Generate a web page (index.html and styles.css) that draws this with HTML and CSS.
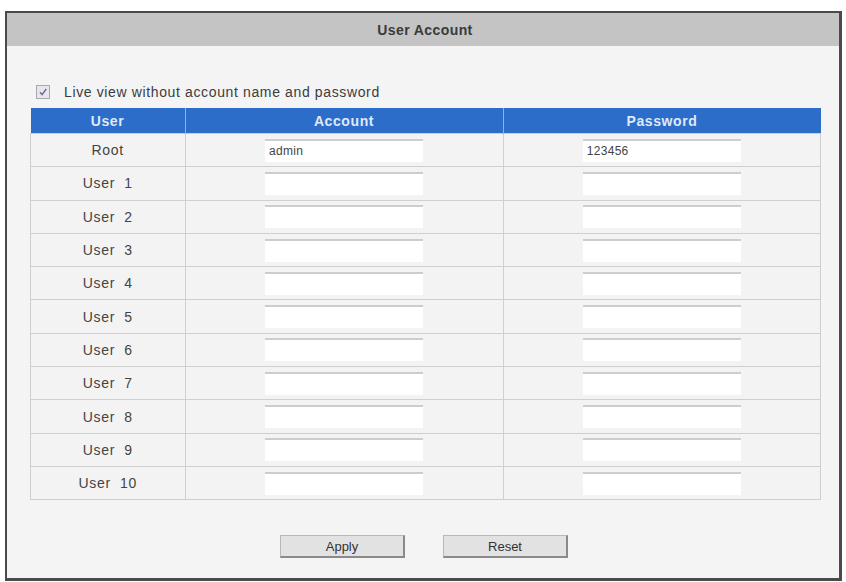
FILE: index.html
```html
<!DOCTYPE html>
<html>
<head>
<meta charset="utf-8">
<title>User Account</title>
<link rel="stylesheet" href="styles.css">
</head>
<body>
<div class="panel">
  <div class="panel-title">User Account</div>
  <div class="panel-body">
    <label class="live-row">
      <span class="check"><svg width="10" height="10" viewBox="0 0 10 10"><path d="M2 5.2 L4.1 7.6 L8.2 2" fill="none" stroke="#6a6a8a" stroke-width="1.4"/></svg></span>
      <span class="live-text">Live view without account name and password</span>
    </label>
    <table class="users">
      <thead>
        <tr><th class="c-user">User</th><th class="c-acc">Account</th><th class="c-pwd">Password</th></tr>
      </thead>
      <tbody>
        <tr><td class="name">Root</td><td><div class="field">admin</div></td><td><div class="field">123456</div></td></tr>
        <tr><td class="name">User&nbsp; 1</td><td><div class="field"></div></td><td><div class="field"></div></td></tr>
        <tr><td class="name">User&nbsp; 2</td><td><div class="field"></div></td><td><div class="field"></div></td></tr>
        <tr><td class="name">User&nbsp; 3</td><td><div class="field"></div></td><td><div class="field"></div></td></tr>
        <tr><td class="name">User&nbsp; 4</td><td><div class="field"></div></td><td><div class="field"></div></td></tr>
        <tr><td class="name">User&nbsp; 5</td><td><div class="field"></div></td><td><div class="field"></div></td></tr>
        <tr><td class="name">User&nbsp; 6</td><td><div class="field"></div></td><td><div class="field"></div></td></tr>
        <tr><td class="name">User&nbsp; 7</td><td><div class="field"></div></td><td><div class="field"></div></td></tr>
        <tr><td class="name">User&nbsp; 8</td><td><div class="field"></div></td><td><div class="field"></div></td></tr>
        <tr><td class="name">User&nbsp; 9</td><td><div class="field"></div></td><td><div class="field"></div></td></tr>
        <tr><td class="name">User&nbsp; 10</td><td><div class="field"></div></td><td><div class="field"></div></td></tr>
      </tbody>
    </table>
    <div class="actions">
      <button class="btn">Apply</button>
      <button class="btn">Reset</button>
    </div>
  </div>
</div>
</body>
</html>
```
FILE: styles.css
```css
html, body {
  margin: 0;
  padding: 0;
  background: #ffffff;
  font-family: "Liberation Sans", Arial, sans-serif;
  color: #333;
}
body {
  padding: 11px 0 0 5px;
}
.panel {
  width: 832px;
  height: 565px;
  border-style: solid;
  border-color: #4a4a4a;
  border-width: 2px 3px 3px 2px;
  background: #f4f4f4;
  display: flex;
  flex-direction: column;
}
.panel-title {
  height: 33px;
  background: #c4c4c4;
  display: flex;
  align-items: center;
  justify-content: center;
  font-size: 14px;
  font-weight: bold;
  letter-spacing: 0.4px;
  color: #3a3a3a;
  padding-left: 4px;
}
.panel-body {
  padding: 0 21px 0 23px;
  display: flex;
  flex-direction: column;
}
.live-row {
  margin-top: 39px;
  height: 14px;
  display: flex;
  align-items: center;
  margin-left: 6px;
}
.check {
  width: 12px;
  height: 12px;
  border: 1px solid #a8a8b0;
  background: #e6e6ec;
  display: flex;
  align-items: center;
  justify-content: center;
}
.live-text {
  margin-left: 14px;
  font-size: 14px;
  color: #3c3c3c;
  letter-spacing: 0.63px;
}
.users {
  margin-top: 9px;
  width: 791px;
  border-collapse: collapse;
  table-layout: fixed;
  background: #f3f3f3;
}
.users th {
  background: #2d6dca;
  color: #dfe9f7;
  font-size: 14px;
  font-weight: bold;
  letter-spacing: 0.6px;
  height: 25px;
  padding: 0;
  border-left: 1px solid #8fb2e3;
}
.users th:first-child {
  border-left: none;
}
.c-user { width: 154px; }
.c-acc { width: 317px; }
.users td {
  height: 32.3px;
  padding: 0;
  border: 1px solid #cfcfcf;
  text-align: center;
  vertical-align: middle;
}
.users td.name {
  font-size: 14px;
  letter-spacing: 0.7px;
  color: #444;
}
.field {
  width: 158px;
  height: 21px;
  margin: 0 auto;
  background: #ffffff;
  border-top: 2px solid #cdcdcd;
  text-align: left;
  font-size: 12px;
  letter-spacing: 0.3px;
  line-height: 21px;
  text-indent: 4px;
  color: #444;
}
.actions {
  margin-top: 35px;
  display: flex;
  justify-content: center;
  gap: 38px;
}
.btn {
  width: 125px;
  height: 23px;
  background: #e2e2e2;
  border-style: solid;
  border-width: 1px 2px 2px 1px;
  border-color: #b8b8b8 #8a8a8a #8a8a8a #b8b8b8;
  font-family: "Liberation Sans", Arial, sans-serif;
  font-size: 13px;
  color: #333;
  padding: 0;
}
```
